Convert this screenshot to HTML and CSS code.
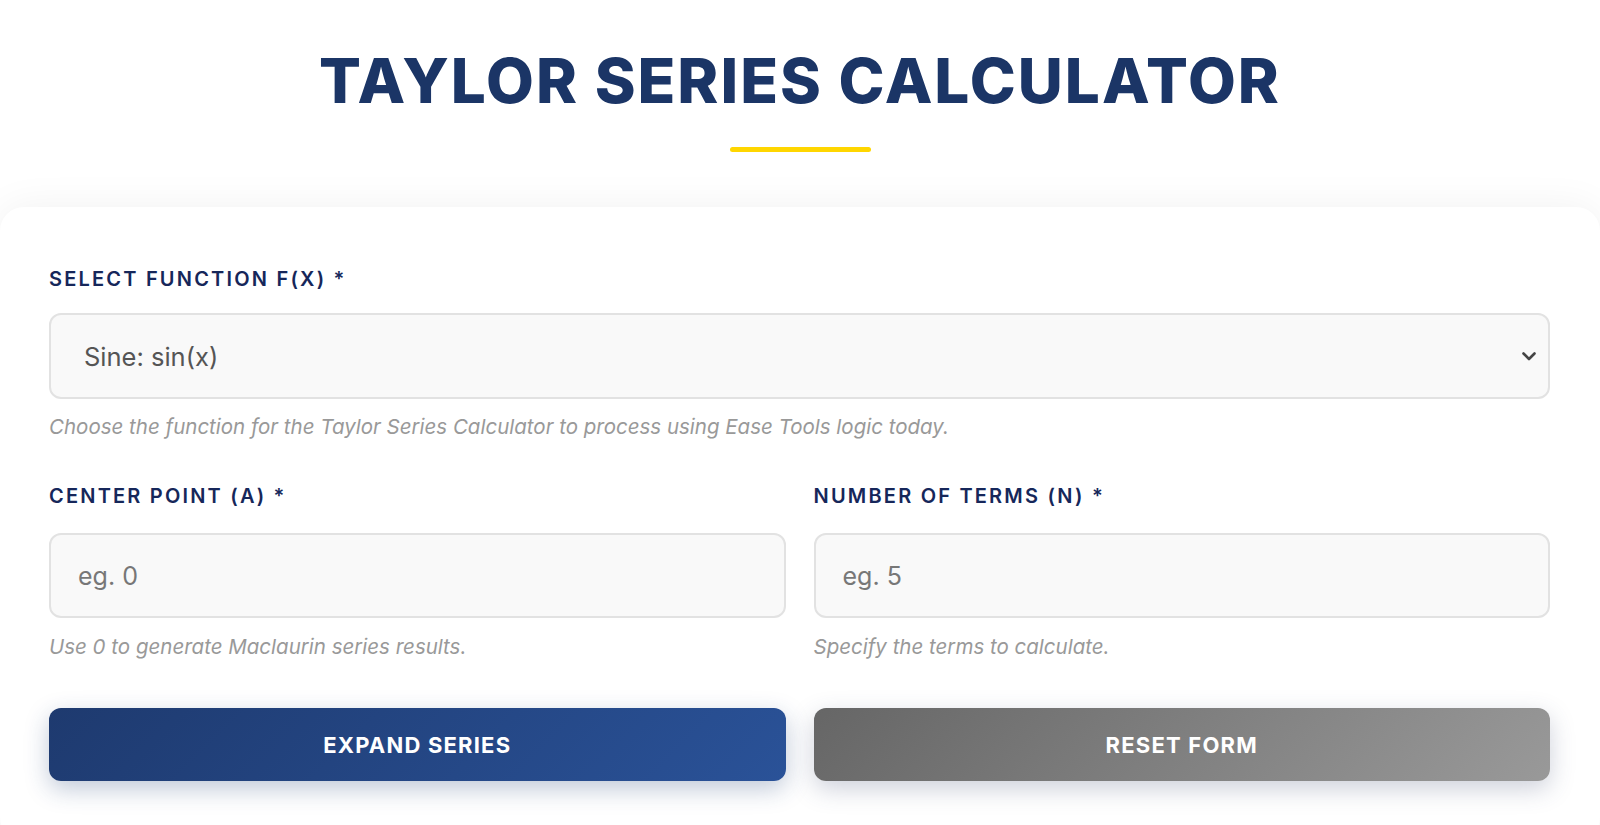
FILE: index.html
```html
<!DOCTYPE html>
<html lang="en">
<head>
    <meta charset="UTF-8">
    <meta name="viewport" content="width=device-width, initial-scale=1.0">
    <title>Taylor Series Calculator</title>
    <link rel="stylesheet" href="styles.css">
</head>
<body>
    <header class="header">
      <h1 class="title">Taylor Series Calculator</h1>
      <div class="underline"></div>
    </header>

    <form class="card" onsubmit="return false">
      <div class="field">
        <label class="label" for="fn">Select Function f(x) *</label>
        <div class="select-wrap">
          <select id="fn" class="control">
            <option>Sine: sin(x)</option>
            <option>Cosine: cos(x)</option>
            <option>Exponential: e^x</option>
            <option>Natural Log: ln(1+x)</option>
          </select>
          <svg class="chevron" width="14" height="9" viewBox="0 0 14 9">
            <path d="M1.5 1.5 L7 7 L12.5 1.5" fill="none" stroke="#444" stroke-width="2.6" stroke-linecap="round" stroke-linejoin="round"/>
          </svg>
        </div>
        <p class="hint">Choose the function for the Taylor Series Calculator to process using Ease Tools logic today.</p>
      </div>

      <div class="row">
        <div class="field">
          <label class="label" for="center">Center Point (a) *</label>
          <input id="center" class="control" type="text" placeholder="eg. 0">
          <p class="hint">Use 0 to generate Maclaurin series results.</p>
        </div>
        <div class="field">
          <label class="label" for="terms">Number of Terms (n) *</label>
          <input id="terms" class="control" type="text" placeholder="eg. 5">
          <p class="hint">Specify the terms to calculate.</p>
        </div>
      </div>

      <div class="row buttons">
        <button class="btn btn-primary" type="submit">Expand Series</button>
        <button class="btn btn-reset" type="reset">Reset Form</button>
      </div>
    </form>
</body>
</html>
```

FILE: styles.css
```css
body {
  margin: 0;
  padding: 0;
  background: #fff;
  font-family: "Inter", "Noto Sans", sans-serif;
  overflow: hidden;
}

.header {
  padding-top: 41px;
  text-align: center;
}

.title {
  margin: 0;
  font-size: 62px;
  line-height: 79px;
  font-weight: 800;
  letter-spacing: 2px;
  text-transform: uppercase;
  color: #1b3566;
}

.underline {
  width: 141px;
  height: 5px;
  margin: 27px auto 0;
  border-radius: 3px;
  background: #ffd600;
}

.card {
  margin-top: 55px;
  padding: 57px 50px 60px 49px;
  background: #fff;
  border-radius: 24px;
  box-shadow: 0 0 40px rgba(0, 0, 0, 0.06);
}

.field {
  display: flex;
  flex-direction: column;
  margin-bottom: 40px;
}

.label {
  font-size: 20px;
  line-height: 30px;
  font-weight: 600;
  letter-spacing: 2.2px;
  text-transform: uppercase;
  color: #16275a;
  margin-bottom: 19px;
}

.select-wrap {
  position: relative;
  display: flex;
  flex-direction: column;
}

.control {
  box-sizing: border-box;
  height: 86px;
  padding: 0 27px;
  border: 2px solid #e2e2e2;
  border-radius: 12px;
  background-color: #f9f9f9;
  font-family: inherit;
  font-size: 25px;
  color: #555;
  outline: none;
}

select.control {
  -webkit-appearance: none;
  appearance: none;
  padding-left: 33px;
  font-size: 25.5px;
}

.chevron {
  position: absolute;
  right: 14px;
  top: 39px;
  pointer-events: none;
}

.control::placeholder {
  color: #777;
}

.hint {
  margin: 14px 0 0;
  font-size: 20.5px;
  line-height: 28px;
  font-style: italic;
  color: #999;
}

.row {
  display: grid;
  grid-template-columns: 1fr 1fr;
  gap: 28px;
}

.row .field {
  margin-bottom: 0;
}

.row .label {
  margin-bottom: 22px;
}

.row .control {
  height: 85px;
}

.row .hint {
  margin-top: 15px;
}

.buttons {
  margin-top: 47px;
}

.btn {
  height: 73px;
  border: none;
  border-radius: 12px;
  font-family: inherit;
  font-size: 22px;
  font-weight: 700;
  letter-spacing: 1.2px;
  text-transform: uppercase;
  color: #fff;
  cursor: pointer;
}

.btn-primary {
  background: linear-gradient(135deg, #1e3a6f, #2a5298);
  box-shadow: 0 8px 24px rgba(30, 60, 114, 0.28);
}

.btn-reset {
  background: linear-gradient(135deg, #666, #999);
  box-shadow: 0 8px 24px rgba(60, 70, 110, 0.25);
}
```
